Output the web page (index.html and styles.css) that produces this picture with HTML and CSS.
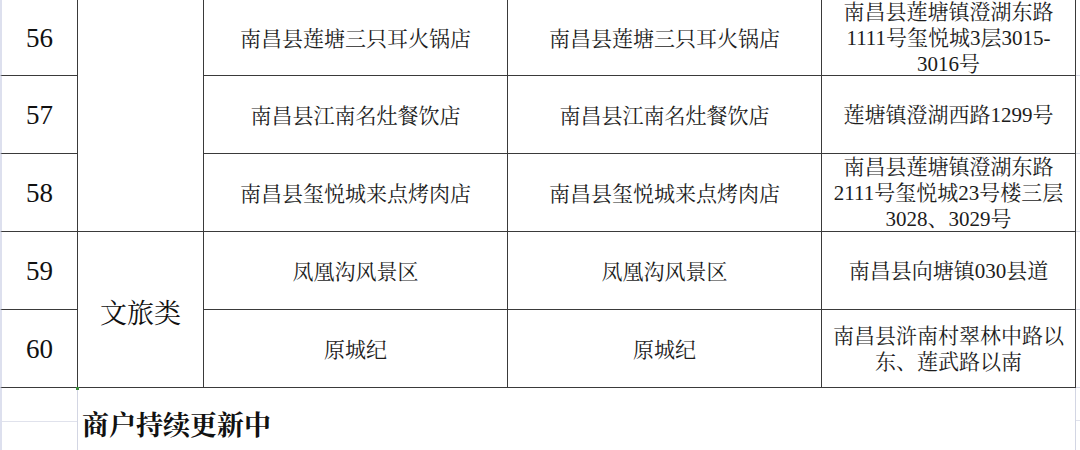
FILE: index.html
```html
<!DOCTYPE html>
<html lang="zh-CN">
<head>
<meta charset="utf-8">
<title>商户列表</title>
<link rel="stylesheet" href="styles.css">
</head>
<body>
<div class="sheet">
  <div class="grid">
    <div class="cell num r1">56</div>
    <div class="cell cat c-food"></div>
    <div class="cell txt r1">南昌县莲塘三只耳火锅店</div>
    <div class="cell txt r1">南昌县莲塘三只耳火锅店</div>
    <div class="cell txt addr r1">南昌县莲塘镇澄湖东路<br>1111号玺悦城3层3015-<br>3016号</div>
    <div class="cell fill r1"></div>

    <div class="cell num">57</div>
    <div class="cell txt">南昌县江南名灶餐饮店</div>
    <div class="cell txt">南昌县江南名灶餐饮店</div>
    <div class="cell txt addr">莲塘镇澄湖西路1299号</div>
    <div class="cell fill"></div>

    <div class="cell num">58</div>
    <div class="cell txt">南昌县玺悦城来点烤肉店</div>
    <div class="cell txt">南昌县玺悦城来点烤肉店</div>
    <div class="cell txt addr">南昌县莲塘镇澄湖东路<br>2111号玺悦城23号楼三层<br>3028、3029号</div>
    <div class="cell fill"></div>

    <div class="cell num">59</div>
    <div class="cell cat c-travel">文旅类</div>
    <div class="cell txt">凤凰沟风景区</div>
    <div class="cell txt">凤凰沟风景区</div>
    <div class="cell txt addr">南昌县向塘镇030县道</div>
    <div class="cell fill"></div>

    <div class="cell num">60</div>
    <div class="cell txt">原城纪</div>
    <div class="cell txt">原城纪</div>
    <div class="cell txt addr">南昌县浒南村翠林中路以<br>东、莲武路以南</div>
    <div class="cell fill"></div>
  </div>
  <div class="footer">
    <div class="foot-side">
      <div class="foot-a"></div>
      <div class="foot-b"></div>
    </div>
    <div class="foot-main">
      <span class="corner"></span>
      <span class="note">商户持续更新中</span>
    </div>
    <div class="foot-right">
      <div class="foot-ra"></div>
      <div class="foot-rb"></div>
    </div>
  </div>
</div>
</body>
</html>
```

FILE: styles.css
```css
* { box-sizing: border-box; }
html, body {
  margin: 0;
  padding: 0;
  background: #ffffff;
}
body {
  width: 1080px;
  height: 450px;
  overflow: hidden;
  font-family: "Liberation Serif", "Noto Serif CJK SC", "Noto Sans CJK SC", serif;
  color: #1c1c1c;
}
.sheet {
  display: flex;
  flex-direction: column;
}
.grid {
  display: grid;
  grid-template-columns: 78px 126px 304px 314px 254px 4px;
  grid-template-rows: 76px 78px 78px 78px 78px;
}
.cell {
  display: flex;
  align-items: center;
  justify-content: center;
  text-align: center;
  border-right: 1px solid #3a3a3a;
  border-bottom: 1px solid #3a3a3a;
}
.num {
  border-left: 2px solid #dde0ee;
  font-size: 27px;
  color: #111;
  padding-top: 2px;
}
.cat {
  font-size: 27px;
  color: #111;
}
.c-food { grid-column: 2; grid-row: 1 / span 3; }
.c-travel { grid-column: 2; grid-row: 4 / span 2; padding-top: 4px; }
.txt {
  font-size: 21px;
  line-height: 26px;
  padding-top: 2px;
}
.addr {
  padding-top: 0;
}
.fill {
  border-right: none;
  border-bottom: 1px solid #d6d9e4;
}
.footer {
  display: flex;
  height: 62px;
}
.foot-side {
  width: 78px;
  display: flex;
  flex-direction: column;
  border-left: 2px solid #dde0ee;
  border-right: 1px solid #d3d6e3;
}
.foot-a {
  height: 34px;
  border-bottom: 1px solid #e0e2ec;
}
.foot-main {
  width: 997px;
  position: relative;
  display: flex;
  align-items: center;
  padding-left: 4px;
  padding-top: 8px;
}
.corner {
  position: absolute;
  left: -2px;
  top: -1px;
  width: 3px;
  height: 3px;
  background: #3a8a3a;
}
.note {
  font-size: 27px;
  font-weight: bold;
  color: #111;
}
.foot-right {
  width: 5px;
  border-left: 1px solid #d3d6e3;
}
.foot-ra {
  height: 33px;
  border-bottom: 1px solid #e0e2ec;
}
```
